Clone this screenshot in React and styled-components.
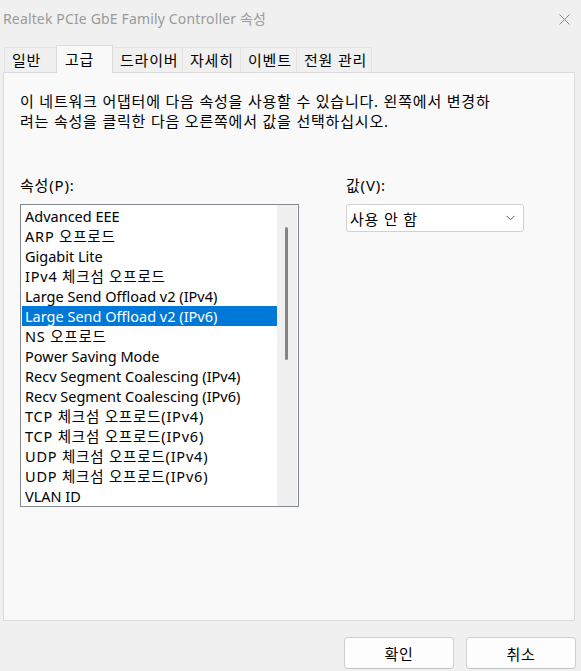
import styled, { createGlobalStyle } from "styled-components";

// Hangul in the reference (Malgun Gothic) runs a bit wider than Noto CJK
const HANGUL_SPACING = "0.8px";
const hasHangul = (text) => /[\uac00-\ud7a3]/.test(text);

const GlobalStyle = createGlobalStyle`
    html, body {
        margin: 0;
        padding: 0;
        background: #f0f0f0;
    }
    body {
        width: 581px;
        height: 671px;
        overflow: hidden;
        font-family: "Noto Sans", "Noto Sans CJK KR", sans-serif;
        color: #000;
    }
`;

const Window = styled.div`
    width: 581px;
    height: 671px;
    display: flex;
    flex-direction: column;
    background: #f0f0f0;
`;

const TitleBar = styled.div`
    height: 36px;
    display: flex;
    align-items: center;
    justify-content: space-between;
    padding: 0 11px 0 3px;
    flex-shrink: 0;
`;

const Title = styled.span`
    font-size: 14px;
    letter-spacing: 0.15px;
    color: #9a9a9a;
    white-space: nowrap;
`;

const CloseIcon = styled.svg`
    width: 11px;
    height: 11px;
    margin-top: 2px;
`;

const TabStrip = styled.div`
    display: flex;
    align-items: flex-start;
    height: 28px;
    margin: 9px 0 0 4px;
`;

const Tab = styled.div`
    position: relative;
    box-sizing: border-box;
    width: ${({ $width }) => $width}px;
    height: ${({ $active }) => ($active ? 28 : 25)}px;
    margin-top: ${({ $active }) => ($active ? 0 : 2)}px;
    padding: 0 0 0 ${({ $active }) => ($active ? 8 : 7)}px;
    font-size: 15px;
    letter-spacing: ${HANGUL_SPACING};
    line-height: ${({ $active }) => ($active ? 26 : 24)}px;
    white-space: nowrap;
    background: ${({ $active }) => ($active ? "#f9f9f9" : "#f0f0f0")};
    border: 1px solid ${({ $active }) => ($active ? "#dcdcdc" : "#e3e3e3")};
    border-bottom: none;
    border-left-width: ${({ $first, $active }) => ($first || $active ? 1 : 0)}px;
    border-right-width: ${({ $beforeActive }) => ($beforeActive ? 0 : 1)}px;
    z-index: ${({ $active }) => ($active ? 2 : 0)};
`;

const Panel = styled.div`
    position: relative;
    z-index: 1;
    box-sizing: border-box;
    width: 572px;
    height: 549px;
    margin: -1px 0 0 3px;
    padding: 18px 16px 0;
    background: #f9f9f9;
    border: 1px solid #dcdcdc;
    flex-shrink: 0;
`;

const Description = styled.p`
    margin: 0;
    font-size: 15px;
    letter-spacing: ${HANGUL_SPACING};
    line-height: 20px;
`;

const Fields = styled.div`
    display: grid;
    grid-template-columns: 279px 178px;
    column-gap: 47px;
    margin-top: 44px;
`;

const Field = styled.div`
    display: flex;
    flex-direction: column;
`;

const Label = styled.label`
    font-size: 15px;
    letter-spacing: ${HANGUL_SPACING};
    line-height: 20px;
    margin-bottom: 9px;
`;

const ListBox = styled.div`
    box-sizing: border-box;
    height: 303px;
    display: flex;
    background: #fff;
    border: 1px solid #828790;
`;

const Items = styled.div`
    flex: 1;
    padding: 1px 0 0 1px;
`;

const Item = styled.div`
    height: 20px;
    line-height: 20px;
    padding-left: 3px;
    font-size: 14.5px;
    letter-spacing: ${({ $korean }) => ($korean ? HANGUL_SPACING : "0")};
    white-space: nowrap;
    background: ${({ $selected }) => ($selected ? "#0078d7" : "transparent")};
    color: ${({ $selected }) => ($selected ? "#fff" : "#000")};
`;

const ScrollTrack = styled.div`
    width: 20px;
    margin-right: 1px;
    padding-top: 22px;
    background: #f0f0f0;
    box-sizing: border-box;
`;

const ScrollThumb = styled.div`
    width: 3px;
    height: 133px;
    margin-left: 8px;
    border-radius: 2px;
    background: #858585;
`;

const Select = styled.div`
    box-sizing: border-box;
    height: 28px;
    display: flex;
    align-items: center;
    justify-content: space-between;
    padding: 0 8px 0 3px;
    background: #fff;
    border: 1px solid #d0d0d0;
    border-radius: 3px;
    font-size: 15px;
    letter-spacing: ${HANGUL_SPACING};
`;

const Chevron = styled.svg`
    width: 9px;
    height: 6px;
`;

const Footer = styled.div`
    display: flex;
    justify-content: flex-end;
    gap: 12px;
    padding: 16px 5px 0 0;
`;

const Button = styled.button`
    box-sizing: border-box;
    width: 110px;
    height: 32px;
    padding: 0;
    font-family: inherit;
    font-size: 15px;
    letter-spacing: ${HANGUL_SPACING};
    color: #000;
    background: #fdfdfd;
    border: 1px solid #d0d0d0;
    border-bottom-color: #c4c4c4;
    border-radius: 4px;
`;

const tabs = [
    { label: "일반", width: 52 },
    { label: "고급", width: 57 },
    { label: "드라이버", width: 70 },
    { label: "자세히", width: 58 },
    { label: "이벤트", width: 56 },
    { label: "전원 관리", width: 75 },
];

const properties = [
    "Advanced EEE",
    "ARP 오프로드",
    "Gigabit Lite",
    "IPv4 체크섬 오프로드",
    "Large Send Offload v2 (IPv4)",
    "Large Send Offload v2 (IPv6)",
    "NS 오프로드",
    "Power Saving Mode",
    "Recv Segment Coalescing (IPv4)",
    "Recv Segment Coalescing (IPv6)",
    "TCP 체크섬 오프로드(IPv4)",
    "TCP 체크섬 오프로드(IPv6)",
    "UDP 체크섬 오프로드(IPv4)",
    "UDP 체크섬 오프로드(IPv6)",
    "VLAN ID",
];

const activeTab = 1;
const selectedProperty = 5;

function App() {
    return (
        <>
            <GlobalStyle />
            <Window>
                <TitleBar>
                    <Title>Realtek PCIe GbE Family Controller 속성</Title>
                    <CloseIcon viewBox="0 0 11 11">
                        <path d="M0.5 0.5 L10.5 10.5 M10.5 0.5 L0.5 10.5" stroke="#8a8a8a" strokeWidth="1" fill="none" />
                    </CloseIcon>
                </TitleBar>
                <TabStrip>
                    {tabs.map((tab, index) => (
                        <Tab
                            key={tab.label}
                            $width={tab.width}
                            $active={index === activeTab}
                            $first={index === 0}
                            $beforeActive={index === activeTab - 1}
                        >
                            {tab.label}
                        </Tab>
                    ))}
                </TabStrip>
                <Panel>
                    <Description>
                        이 네트워크 어댑터에 다음 속성을 사용할 수 있습니다. 왼쪽에서 변경하
                        <br />
                        려는 속성을 클릭한 다음 오른쪽에서 값을 선택하십시오.
                    </Description>
                    <Fields>
                        <Field>
                            <Label>속성(P):</Label>
                            <ListBox>
                                <Items>
                                    {properties.map((name, index) => (
                                        <Item
                                            key={name}
                                            $selected={index === selectedProperty}
                                            $korean={hasHangul(name)}
                                        >
                                            {name}
                                        </Item>
                                    ))}
                                </Items>
                                <ScrollTrack>
                                    <ScrollThumb />
                                </ScrollTrack>
                            </ListBox>
                        </Field>
                        <Field>
                            <Label>값(V):</Label>
                            <Select>
                                <span>사용 안 함</span>
                                <Chevron viewBox="0 0 9 6">
                                    <path d="M0.5 0.8 L4.5 4.8 L8.5 0.8" stroke="#5a5a5a" strokeWidth="1" fill="none" />
                                </Chevron>
                            </Select>
                        </Field>
                    </Fields>
                </Panel>
                <Footer>
                    <Button>확인</Button>
                    <Button>취소</Button>
                </Footer>
            </Window>
        </>
    );
}

export default App;
